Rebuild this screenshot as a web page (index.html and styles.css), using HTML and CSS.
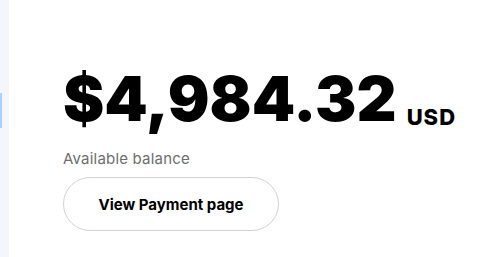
FILE: index.html
```html
<!DOCTYPE html>
<html lang="en">
<head>
    <meta charset="UTF-8">
    <title>Balance</title>
    <link rel="stylesheet" href="styles.css">
</head>
<body>
    <div class="layout">
        <aside class="sidebar">
            <div class="active-mark"></div>
        </aside>
        <main class="balance">
            <div class="amount"><span class="value">$4,984.32</span><span class="currency">USD</span></div>
            <p class="label">Available balance</p>
            <a href="#" class="btn">View Payment page</a>
        </main>
    </div>
</body>
</html>
```
FILE: styles.css
```css
* {
    margin: 0;
    padding: 0;
    box-sizing: border-box;
}

body {
    font-family: Inter, 'Liberation Sans', sans-serif;
    background: #fff;
    color: #000;
}

.layout {
    display: flex;
    height: 257px;
}

.sidebar {
    width: 9px;
    background: #f4f6fb;
}

.active-mark {
    width: 2px;
    height: 35px;
    margin-top: 93px;
    background: #a9d3ff;
}

.balance {
    padding: 64px 0 0 54px;
}

.amount {
    font-size: 62px;
    line-height: 70px;
    white-space: nowrap;
}

.value {
    font-weight: 900;
}

.currency {
    margin-left: 10px;
    font-size: 22px;
    font-weight: 800;
    letter-spacing: 1px;
    line-height: 1;
    vertical-align: -4px;
}

.label {
    margin-top: 15px;
    font-size: 15px;
    letter-spacing: 0.2px;
    color: #6e6e6e;
}

.btn {
    display: flex;
    align-items: center;
    justify-content: center;
    width: 216px;
    height: 54px;
    margin-top: 9px;
    border: 1px solid #d2d2d2;
    border-radius: 27px;
    color: #000;
    font-size: 15px;
    font-weight: 700;
    text-decoration: none;
}
```
